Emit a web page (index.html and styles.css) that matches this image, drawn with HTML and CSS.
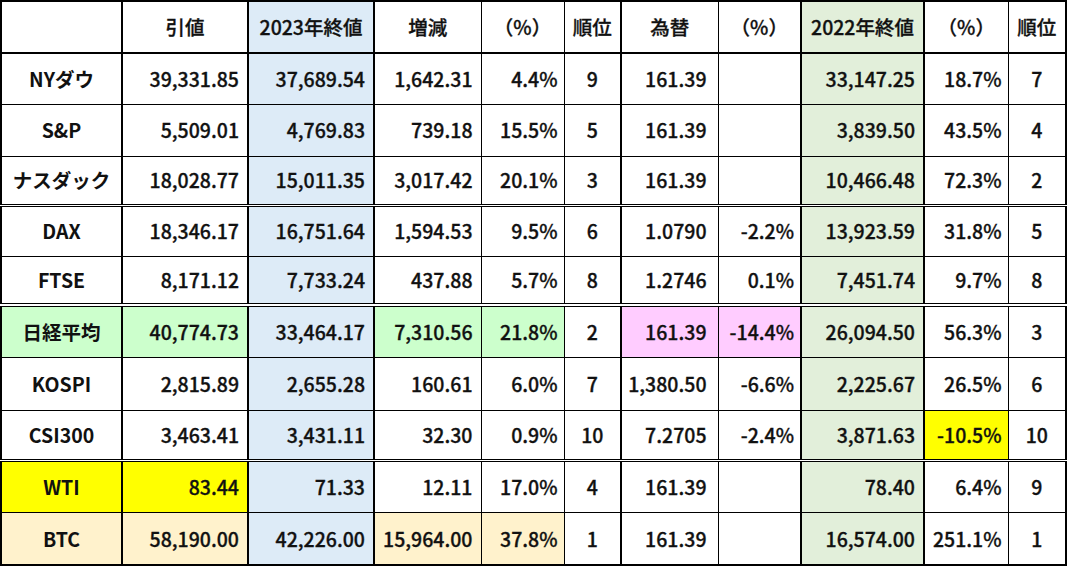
FILE: index.html
```html
<!DOCTYPE html>
<html lang="ja">
<head>
<meta charset="utf-8">
<title>指数比較</title>
<link rel="stylesheet" href="styles.css">
</head>
<body>
<table class="grid">
  <colgroup>
    <col class="c-name"><col class="c-close"><col class="c-2023"><col class="c-diff"><col class="c-pct">
    <col class="c-rank"><col class="c-fx"><col class="c-fxpct"><col class="c-2022"><col class="c-pct2"><col class="c-rank2">
  </colgroup>
  <thead>
    <tr class="r-h">
      <th class="name"></th><th class="tk">引値</th><th class="tk blue">2023年終値</th><th>増減</th><th>（%）</th>
      <th class="tk">順位</th><th>為替</th><th class="tk">（%）</th><th class="tk green">2022年終値</th><th>（%）</th><th class="end">順位</th>
    </tr>
  </thead>
  <tbody>
    <tr class="r1">
      <td class="name">NYダウ</td><td class="num tk">39,331.85</td><td class="num blue tk">37,689.54</td><td class="num">1,642.31</td><td class="num p">4.4%</td>
      <td class="rk tk">9</td><td class="num fx">161.39</td><td class="num p tk"></td><td class="num green tk">33,147.25</td><td class="num p">18.7%</td><td class="rk end">7</td>
    </tr>
    <tr class="r2">
      <td class="name">S&amp;P</td><td class="num tk">5,509.01</td><td class="num blue tk">4,769.83</td><td class="num">739.18</td><td class="num p">15.5%</td>
      <td class="rk tk">5</td><td class="num fx">161.39</td><td class="num p tk"></td><td class="num green tk">3,839.50</td><td class="num p">43.5%</td><td class="rk end">4</td>
    </tr>
    <tr class="r3 sep">
      <td class="name">ナスダック</td><td class="num tk">18,028.77</td><td class="num blue tk">15,011.35</td><td class="num">3,017.42</td><td class="num p">20.1%</td>
      <td class="rk tk">3</td><td class="num fx">161.39</td><td class="num p tk"></td><td class="num green tk">10,466.48</td><td class="num p">72.3%</td><td class="rk end">2</td>
    </tr>
    <tr class="r4">
      <td class="name">DAX</td><td class="num tk">18,346.17</td><td class="num blue tk">16,751.64</td><td class="num">1,594.53</td><td class="num p">9.5%</td>
      <td class="rk tk">6</td><td class="num fx">1.0790</td><td class="num p tk">-2.2%</td><td class="num green tk">13,923.59</td><td class="num p">31.8%</td><td class="rk end">5</td>
    </tr>
    <tr class="r5 sep2">
      <td class="name">FTSE</td><td class="num tk">8,171.12</td><td class="num blue tk">7,733.24</td><td class="num">437.88</td><td class="num p">5.7%</td>
      <td class="rk tk">8</td><td class="num fx">1.2746</td><td class="num p tk">0.1%</td><td class="num green tk">7,451.74</td><td class="num p">9.7%</td><td class="rk end">8</td>
    </tr>
    <tr class="r6">
      <td class="name lgreen">日経平均</td><td class="num tk lgreen">40,774.73</td><td class="num blue tk">33,464.17</td><td class="num lgreen">7,310.56</td><td class="num p lgreen">21.8%</td>
      <td class="rk tk">2</td><td class="num fx pink">161.39</td><td class="num p tk pink">-14.4%</td><td class="num green tk">26,094.50</td><td class="num p">56.3%</td><td class="rk end">3</td>
    </tr>
    <tr class="r7">
      <td class="name">KOSPI</td><td class="num tk">2,815.89</td><td class="num blue tk">2,655.28</td><td class="num">160.61</td><td class="num p">6.0%</td>
      <td class="rk tk">7</td><td class="num fx">1,380.50</td><td class="num p tk">-6.6%</td><td class="num green tk">2,225.67</td><td class="num p">26.5%</td><td class="rk end">6</td>
    </tr>
    <tr class="r8 sep">
      <td class="name">CSI300</td><td class="num tk">3,463.41</td><td class="num blue tk">3,431.11</td><td class="num">32.30</td><td class="num p">0.9%</td>
      <td class="rk tk">10</td><td class="num fx">7.2705</td><td class="num p tk">-2.4%</td><td class="num green tk">3,871.63</td><td class="num p yellow">-10.5%</td><td class="rk end">10</td>
    </tr>
    <tr class="r9">
      <td class="name yellow">WTI</td><td class="num tk yellow">83.44</td><td class="num blue tk">71.33</td><td class="num">12.11</td><td class="num p">17.0%</td>
      <td class="rk tk">4</td><td class="num fx">161.39</td><td class="num p tk"></td><td class="num green tk">78.40</td><td class="num p">6.4%</td><td class="rk end">9</td>
    </tr>
    <tr class="r10 last">
      <td class="name peach">BTC</td><td class="num tk peach">58,190.00</td><td class="num blue tk">42,226.00</td><td class="num peach">15,964.00</td><td class="num p peach">37.8%</td>
      <td class="rk tk">1</td><td class="num fx">161.39</td><td class="num p tk"></td><td class="num green tk">16,574.00</td><td class="num p">251.1%</td><td class="rk end">1</td>
    </tr>
  </tbody>
</table>
</body>
</html>
```

FILE: styles.css
```css
html, body {
  margin: 0;
  padding: 0;
  background: #ffffff;
}

.grid {
  border-collapse: collapse;
  table-layout: fixed;
  width: 1065px;
  font-family: "Noto Sans CJK JP", "Noto Sans", sans-serif;
  font-size: 19.5px;
  font-weight: 500;
  color: #111111;
  border: 2px solid #000;
  -webkit-text-stroke: 0.3px #111111;
}

.c-name { width: 121px; }
.c-close { width: 126px; }
.c-2023 { width: 126px; }
.c-diff { width: 107px; }
.c-pct { width: 83px; }
.c-rank { width: 57px; }
.c-fx { width: 97px; }
.c-fxpct { width: 83px; }
.c-2022 { width: 123px; }
.c-pct2 { width: 84px; }
.c-rank2 { width: 58px; }

.grid th,
.grid td {
  border-left: 1px solid #000;
  border-right: 1px solid #000;
  border-bottom: 1px solid #000;
  padding: 0;
  line-height: 1;
  white-space: nowrap;
  overflow: hidden;
}

.grid th {
  font-weight: 500;
  text-align: center;
  border-bottom: 2px solid #000;
}

.grid .tk { border-right: 2px solid #000; }
.grid .end { border-right: 2px solid #000; }
.grid .name { border-right: 2px solid #000; text-align: center; font-weight: 700; -webkit-text-stroke: 0; }

.num { text-align: right; padding-right: 8px !important; }
.num.p { padding-right: 6px !important; }
.num.fx { padding-right: 11px !important; }
.rk { text-align: center; }

.r-h { height: 52px; }
.r1 { height: 51px; }
.r2 { height: 52px; }
.r3 { height: 49px; }
.r4 { height: 51px; }
.r5 { height: 49px; }
.r6 { height: 52px; }
.r7 { height: 53px; }
.r8 { height: 50px; }
.r9 { height: 52px; }
.r10 { height: 53px; }

.sep td { border-bottom: 3px double #000; }
.sep2 td { border-bottom: 4px double #000; }
.last td { border-bottom: 2px solid #000; }

.blue { background: #ddebf7; }
.green { background: #e2efda; }
.lgreen { background: #ccffcc; }
.pink { background: #ffccff; }
.yellow { background: #ffff00; }
.peach { background: #fff2cc; }
```
